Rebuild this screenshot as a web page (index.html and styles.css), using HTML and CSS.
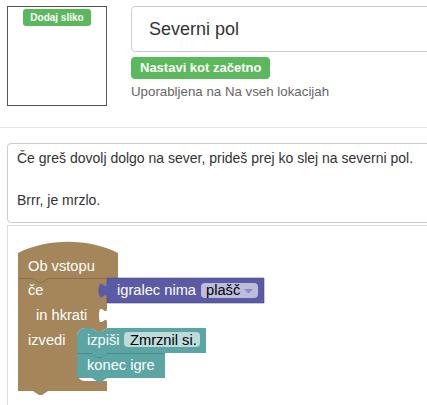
FILE: index.html
```html
<!DOCTYPE html>
<html lang="sl">
<head>
<meta charset="utf-8">
<title>Severni pol</title>
<link rel="stylesheet" href="styles.css">
</head>
<body>
<div class="page">
  <div class="top">
    <div class="image-box">
      <span class="badge">Dodaj sliko</span>
    </div>
    <div class="details">
      <div class="name-input">Severni pol</div>
      <span class="btn-start">Nastavi kot začetno</span>
      <div class="usage">Uporabljena na Na vseh lokacijah</div>
    </div>
  </div>
  <hr class="divider">
  <div class="description">
    <p>Če greš dovolj dolgo na sever, prideš prej ko slej na severni pol.</p>
    <p class="blank">&nbsp;</p>
    <p>Brrr, je mrzlo.</p>
  </div>
  <div class="workspace">
    <svg class="blocks" width="420" height="181" viewBox="8 225 420 181" xmlns="http://www.w3.org/2000/svg">
      <!-- brown hat + if block -->
      <path class="brown" d="M 18,252 c 30,-15 70,-15 100,0 V 277 H 107 V 282 c 0,10 -8,-8 -8,7.5 s 8,-2.5 8,7.5 V 307 c 0,10 -8,-8 -8,7.5 s 8,-2.5 8,7.5 V 327 l -6,4 -3,0 -6,-4 h -7 a 8,8 0 0,0 -8,8 V 372 a 8,8 0 0,0 8,8 H 107 V 390 H 48 l -6,4 -3,0 -6,-4 H 18 Z"/>
      <path class="seam-brown" d="M 18.5,277.5 H 33 l 6,4 3,0 6,-4 H 118"/>
      <!-- purple value block -->
      <path class="purple" d="M 107,277 H 264 V 302 H 107 V 297 c 0,-10 -8,8 -8,-7.5 s 8,2.5 8,-7.5 Z"/>
      <rect class="field-purple" x="201" y="282" width="57" height="15" rx="4" ry="4"/>
      <!-- teal blocks -->
      <path class="teal" d="M 77,335 a 8,8 0 0,1 8,-8 H 92 l 6,4 3,0 6,-4 H 206 V 352 H 107 l -6,4 -3,0 -6,-4 H 77 Z"/>
      <rect class="field-teal" x="124" y="331" width="76" height="15" rx="4" ry="4"/>
      <path class="teal" d="M 77,352 H 92 l 6,4 3,0 6,-4 H 165 V 377 H 107 l -6,4 -3,0 -6,-4 H 77 Z"/>
      <path class="seam-teal" d="M 77,352.5 H 92 l 6,4 3,0 6,-4 H 165"/>
      <!-- labels -->
      <text class="lbl" x="28" y="270">Ob vstopu</text>
      <text class="lbl" x="28" y="294">če</text>
      <text class="lbl" x="36" y="319">in hkrati</text>
      <text class="lbl" x="28" y="344">izvedi</text>
      <text class="lbl" x="117" y="294">igralec nima</text>
      <text class="fld" x="206" y="294">plašč</text>
      <path class="arrow" d="M 244,288 h 9 l -4.5,4.5 Z"/>
      <text class="lbl" x="87" y="344">izpiši</text>
      <text class="fld" x="130" y="344">Zmrznil si.</text>
      <text class="lbl" x="87" y="369">konec igre</text>
    </svg>
  </div>
</div>
</body>
</html>
```
FILE: styles.css
```css
html, body {
  margin: 0;
  padding: 0;
  background: #ffffff;
  overflow: hidden;
}
body {
  font-family: "Liberation Sans", Arial, sans-serif;
  color: #333333;
}
.page {
  width: 427px;
  height: 405px;
  overflow: hidden;
}
.top {
  display: flex;
  gap: 24px;
  padding: 6px 0 0 7px;
}
.image-box {
  flex: none;
  width: 100px;
  height: 100px;
  box-sizing: border-box;
  border: 1px solid #555555;
  display: flex;
  justify-content: center;
  align-items: flex-start;
  padding-top: 2px;
}
.badge {
  background: #5cb85c;
  color: #ffffff;
  font-size: 10px;
  font-weight: bold;
  line-height: 17px;
  height: 17px;
  padding: 0 7px;
  border-radius: 3px;
}
.details {
  flex: none;
  width: 310px;
}
.name-input {
  box-sizing: border-box;
  height: 46px;
  border: 1px solid #cccccc;
  border-radius: 4px;
  padding-left: 17px;
  font-size: 18px;
  line-height: 44px;
  color: #333333;
}
.btn-start {
  display: inline-block;
  margin-top: 5px;
  height: 22px;
  line-height: 22px;
  padding: 0 9px;
  background: #5cb85c;
  color: #ffffff;
  font-size: 13px;
  font-weight: bold;
  border-radius: 4px;
}
.usage {
  margin-top: 3px;
  font-size: 13.3px;
  line-height: 20px;
  color: #666666;
}
.divider {
  margin: 21px 0 0 0;
  border: 0;
  border-top: 1px solid #e6e6e6;
  height: 0;
}
.description {
  margin: 15px -10px 0 7px;
  border: 1px solid #cccccc;
  border-radius: 4px;
  padding: 4px 10px 11px 9px;
  font-size: 14px;
  line-height: 21px;
  color: #333333;
}
.description p {
  margin: 0;
}
.workspace {
  margin: 2px -10px 0 7px;
  height: 190px;
  border-top: 1px solid #dddddd;
  border-left: 1px solid #dddddd;
}
.blocks {
  display: block;
}
.brown { fill: #a5865b; }
.purple { fill: #5b5ba5; stroke: #4a4a8c; stroke-width: 0.6; }
.teal { fill: #5ba5a5; }
.seam-brown { fill: none; stroke: #8a6f4b; stroke-width: 1; }
.seam-teal { fill: none; stroke: #4a8c8c; stroke-width: 1; }
.field-purple { fill: #bdbddb; }
.field-teal { fill: #bddbdb; }
.arrow { fill: #8c8cc4; }
.lbl {
  font-family: "Liberation Sans", Arial, sans-serif;
  font-size: 11pt;
  fill: #ffffff;
}
.fld {
  font-family: "Liberation Sans", Arial, sans-serif;
  font-size: 11pt;
  fill: #000000;
}
```
